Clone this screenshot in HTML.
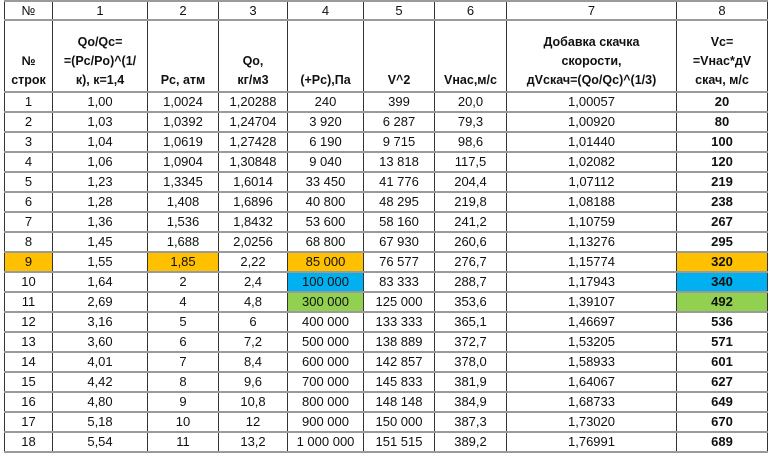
<!DOCTYPE html>
<html><head><meta charset="utf-8"><style>
body{margin:0;background:#fff;width:769px;height:453px;overflow:hidden;}
table{position:absolute;left:4px;top:0;border-collapse:collapse;table-layout:fixed;font-family:"Liberation Sans",sans-serif;font-size:13px;color:#111;}
td{border-top:2px solid #9a9a9a;border-bottom:2px solid #9a9a9a;border-left:1px solid #333;border-right:1px solid #333;text-align:center;padding:0;height:18px;line-height:16px;white-space:nowrap;overflow:hidden;}
tr.h2 td{height:69px;vertical-align:bottom;font-weight:bold;font-size:12.5px;line-height:19px;padding-bottom:1px;}
tr.h1 td{height:17px;}
td.b{font-weight:bold;}
.o{background:#FFC000}.bl{background:#00B0F0}.g{background:#92D050}
</style></head><body>
<table>
<colgroup><col style="width:48px"><col style="width:95px"><col style="width:71px"><col style="width:69px"><col style="width:76px"><col style="width:71px"><col style="width:72px"><col style="width:170px"><col style="width:91px"></colgroup>
<tr class="h1"><td>№</td><td>1</td><td>2</td><td>3</td><td>4</td><td>5</td><td>6</td><td>7</td><td>8</td></tr>
<tr class="h2"><td>№<br>строк</td><td>Qo/Qc=<br>=(Pc/Po)^(1/<br>к), к=1,4</td><td>Pc, атм</td><td>Qo,<br>кг/м3</td><td>(+Pc),Па</td><td>V^2</td><td>Vнас,м/с</td><td>Добавка скачка<br>скорости,<br>дVскач=(Qo/Qc)^(1/3)</td><td>Vc=<br>=Vнас*дV<br>скач, м/с</td></tr>
<tr><td>1</td><td>1,00</td><td>1,0024</td><td>1,20288</td><td>240</td><td>399</td><td>20,0</td><td>1,00057</td><td class="b">20</td></tr>
<tr><td>2</td><td>1,03</td><td>1,0392</td><td>1,24704</td><td>3 920</td><td>6 287</td><td>79,3</td><td>1,00920</td><td class="b">80</td></tr>
<tr><td>3</td><td>1,04</td><td>1,0619</td><td>1,27428</td><td>6 190</td><td>9 715</td><td>98,6</td><td>1,01440</td><td class="b">100</td></tr>
<tr><td>4</td><td>1,06</td><td>1,0904</td><td>1,30848</td><td>9 040</td><td>13 818</td><td>117,5</td><td>1,02082</td><td class="b">120</td></tr>
<tr><td>5</td><td>1,23</td><td>1,3345</td><td>1,6014</td><td>33 450</td><td>41 776</td><td>204,4</td><td>1,07112</td><td class="b">219</td></tr>
<tr><td>6</td><td>1,28</td><td>1,408</td><td>1,6896</td><td>40 800</td><td>48 295</td><td>219,8</td><td>1,08188</td><td class="b">238</td></tr>
<tr><td>7</td><td>1,36</td><td>1,536</td><td>1,8432</td><td>53 600</td><td>58 160</td><td>241,2</td><td>1,10759</td><td class="b">267</td></tr>
<tr><td>8</td><td>1,45</td><td>1,688</td><td>2,0256</td><td>68 800</td><td>67 930</td><td>260,6</td><td>1,13276</td><td class="b">295</td></tr>
<tr><td class="o">9</td><td>1,55</td><td class="o">1,85</td><td>2,22</td><td class="o">85 000</td><td>76 577</td><td>276,7</td><td>1,15774</td><td class="b o">320</td></tr>
<tr><td>10</td><td>1,64</td><td>2</td><td>2,4</td><td class="bl">100 000</td><td>83 333</td><td>288,7</td><td>1,17943</td><td class="b bl">340</td></tr>
<tr><td>11</td><td>2,69</td><td>4</td><td>4,8</td><td class="g">300 000</td><td>125 000</td><td>353,6</td><td>1,39107</td><td class="b g">492</td></tr>
<tr><td>12</td><td>3,16</td><td>5</td><td>6</td><td>400 000</td><td>133 333</td><td>365,1</td><td>1,46697</td><td class="b">536</td></tr>
<tr><td>13</td><td>3,60</td><td>6</td><td>7,2</td><td>500 000</td><td>138 889</td><td>372,7</td><td>1,53205</td><td class="b">571</td></tr>
<tr><td>14</td><td>4,01</td><td>7</td><td>8,4</td><td>600 000</td><td>142 857</td><td>378,0</td><td>1,58933</td><td class="b">601</td></tr>
<tr><td>15</td><td>4,42</td><td>8</td><td>9,6</td><td>700 000</td><td>145 833</td><td>381,9</td><td>1,64067</td><td class="b">627</td></tr>
<tr><td>16</td><td>4,80</td><td>9</td><td>10,8</td><td>800 000</td><td>148 148</td><td>384,9</td><td>1,68733</td><td class="b">649</td></tr>
<tr><td>17</td><td>5,18</td><td>10</td><td>12</td><td>900 000</td><td>150 000</td><td>387,3</td><td>1,73020</td><td class="b">670</td></tr>
<tr><td>18</td><td>5,54</td><td>11</td><td>13,2</td><td>1 000 000</td><td>151 515</td><td>389,2</td><td>1,76991</td><td class="b">689</td></tr>
</table>
</body></html>
